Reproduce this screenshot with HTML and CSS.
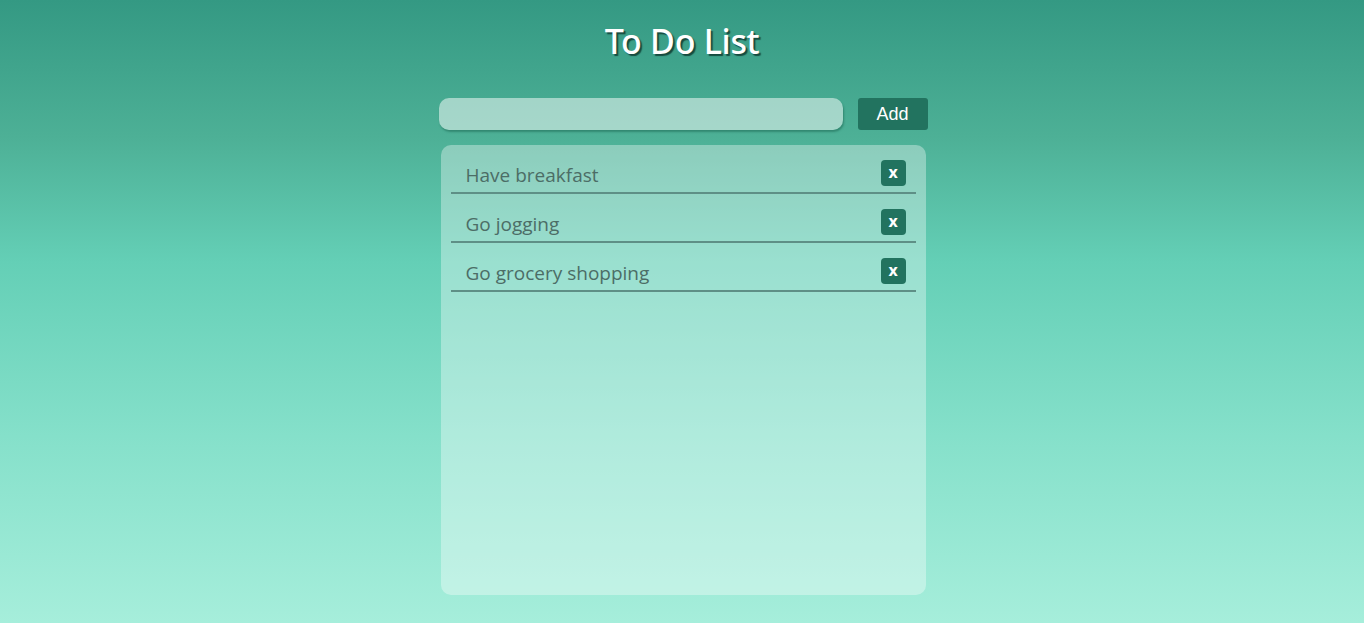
FILE: index.html
```html
<!DOCTYPE html>
<html>
<head>
<meta charset="utf-8">
<link rel="stylesheet" href="styles.css">
</head>
<body>
<div class="app">
  <h1 class="title">To Do List</h1>
  <div class="entry">
    <input class="entry-input" type="text">
    <button class="add-btn">Add</button>
  </div>
  <div class="panel">
    <div class="item"><span class="item-text">Have breakfast</span><button class="del">x</button></div>
    <div class="item"><span class="item-text">Go jogging</span><button class="del">x</button></div>
    <div class="item"><span class="item-text">Go grocery shopping</span><button class="del">x</button></div>
  </div>
</div>
</body>
</html>
```
FILE: styles.css
```css
html, body { margin: 0; padding: 0; }
body {
  height: 623px;
  background: linear-gradient(to bottom, #349983 0%, #4db096 22%, #64cfb6 42%, #85e0ca 70%, #a6eedb 100%);
  font-family: "Open Sans", sans-serif;
  overflow: hidden;
}
.app {
  display: flex;
  flex-direction: column;
  align-items: center;
}
.title {
  margin: 21px 0 0 0;
  height: 40px;
  font-family: "Noto Sans", sans-serif;
  font-weight: 500;
  font-size: 34px;
  line-height: 40px;
  color: #ffffff;
  text-shadow: 2px 2px 1px rgba(15,60,50,0.85);
  letter-spacing: -0.3px;
}
.entry {
  margin-top: 37px;
  display: flex;
  gap: 15px;
  margin-left: 2px;
}
.entry-input {
  width: 404px;
  height: 32px;
  box-sizing: border-box;
  border: none;
  border-radius: 10px;
  background: rgba(255,255,255,0.5);
  box-shadow: 1px 2px 2px rgba(20,90,70,0.45);
  outline: none;
}
.add-btn {
  width: 70px;
  height: 32px;
  border: none;
  border-radius: 3px;
  background: #22735f;
  color: #ffffff;
  font-family: "Liberation Sans", Arial, sans-serif;
  font-size: 18px;
  padding: 0;
}
.panel {
  margin-top: 15px;
  margin-left: 2px;
  width: 485px;
  height: 450px;
  box-sizing: border-box;
  border-radius: 10px;
  background: rgba(255,255,255,0.35);
  padding: 15px 10px 0 10px;
  display: flex;
  flex-direction: column;
  gap: 15px;
}
.item {
  display: flex;
  justify-content: space-between;
  align-items: flex-start;
  height: 32px;
  border-bottom: 2px solid #5e8f86;
  padding: 0 10px 0 15px;
}
.item-text {
  margin-top: 1px;
  font-size: 19px;
  line-height: 28px;
  color: #4c6d66;
}
.del {
  width: 25px;
  height: 26px;
  border: none;
  border-radius: 4px;
  background: #22735f;
  color: #ffffff;
  font-family: "Open Sans", sans-serif;
  font-weight: bold;
  font-size: 16px;
  line-height: 24px;
  padding: 0 0 2px 0;
}
```
